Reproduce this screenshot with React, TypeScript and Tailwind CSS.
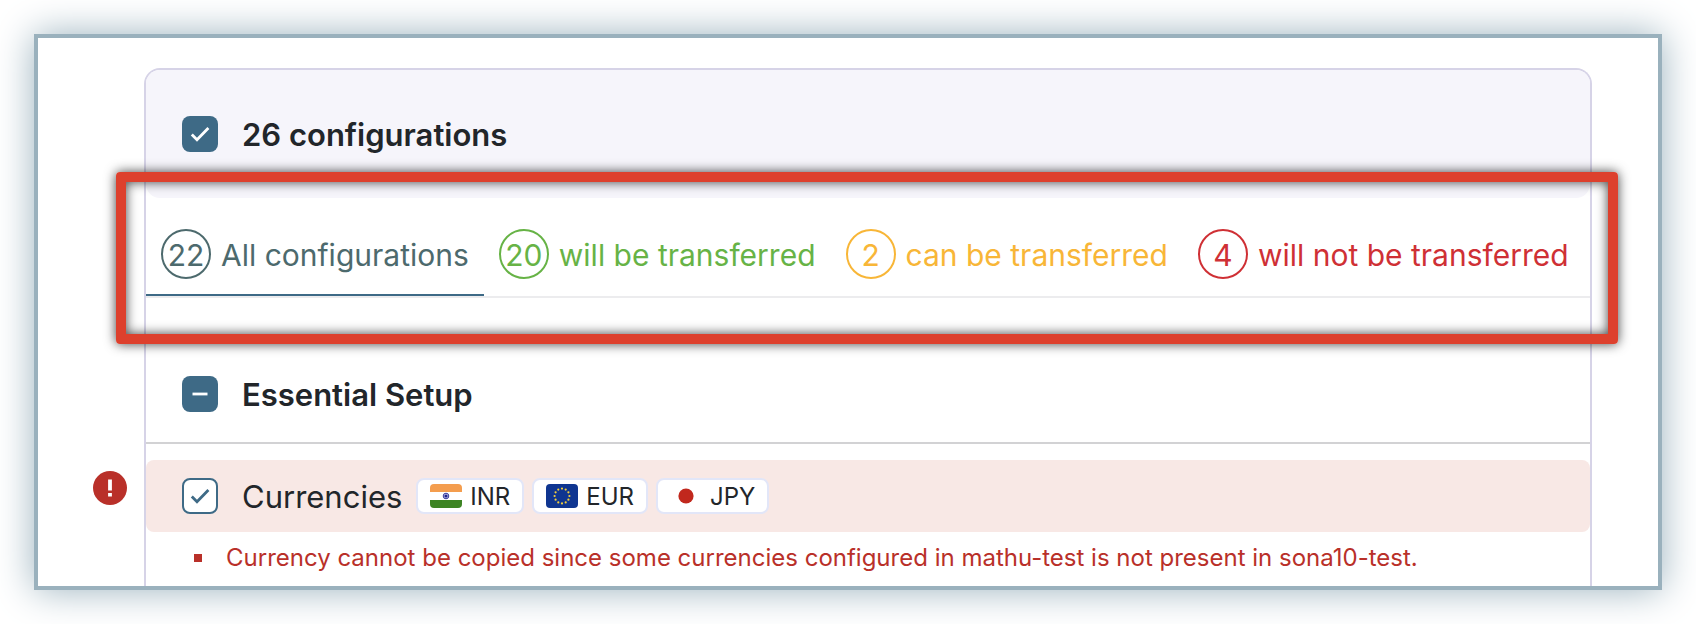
import { useState, type ReactNode } from 'react';
import clsx from 'clsx';

const tabs = [
    { id: 'all', count: 22, label: 'All configurations', color: 'text-[#4d6a6d]' },
    { id: 'will', count: 20, label: 'will be transferred', color: 'text-[#67b346]' },
    { id: 'can', count: 2, label: 'can be transferred', color: 'text-[#f8b637]' },
    { id: 'not', count: 4, label: 'will not be transferred', color: 'text-[#cf3035]' },
];

const currencies = [
    { code: 'INR', flag: <IndiaFlag /> },
    { code: 'EUR', flag: <EuropeFlag /> },
    { code: 'JPY', flag: <JapanFlag /> },
];

function IndiaFlag() {
    return (
        <svg viewBox="0 0 32 24" className="w-8 h-6 rounded-sm" aria-hidden="true">
            <rect width="32" height="24" fill="#fff" />
            <rect width="32" height="8" fill="#f49d4e" />
            <rect y="16" width="32" height="8" fill="#3d8424" />
            <circle cx="16" cy="12" r="2.8" fill="#c5c6e6" stroke="#3a3c9c" strokeWidth="1" />
            <circle cx="16" cy="12" r="1.6" fill="#1f2290" />
        </svg>
    );
}

function EuropeFlag() {
    const stars = Array.from({ length: 12 }, (_, i) => (i * Math.PI) / 6);
    return (
        <svg viewBox="0 0 32 24" className="w-8 h-6 rounded-sm" aria-hidden="true">
            <rect width="32" height="24" fill="#0f3590" />
            {stars.map((a) => (
                <circle key={a} cx={16 + 7.4 * Math.sin(a)} cy={12 - 7.4 * Math.cos(a)} r="1.1" fill="#f3cf3c" />
            ))}
        </svg>
    );
}

function JapanFlag() {
    return (
        <svg viewBox="0 0 32 24" className="w-8 h-6 rounded-sm" aria-hidden="true">
            <rect width="32" height="24" fill="#fff" />
            <circle cx="16" cy="12" r="7.6" fill="#c1281d" />
        </svg>
    );
}

interface CheckFieldProps {
    id: string;
    mark?: 'check' | 'minus';
    outlined?: boolean;
    className?: string;
    children: ReactNode;
}

function CheckField({ id, mark = 'check', outlined = false, className, children }: CheckFieldProps) {
    const [checked, setChecked] = useState(true);

    return (
        <div className="flex items-center gap-6">
            <span className="grid size-9 shrink-0 place-items-center">
                <input
                    id={id}
                    type="checkbox"
                    checked={checked}
                    onChange={() => setChecked(!checked)}
                    className={clsx(
                        "col-start-1 row-start-1 size-9 appearance-none rounded-lg",
                        outlined ? "border-2 border-[#3e6a86] bg-white" : "bg-[#3e6a86]"
                    )}
                />
                {checked && (
                    <svg
                        viewBox="0 0 36 36"
                        fill="none"
                        strokeWidth="2.8"
                        className={clsx(
                            "pointer-events-none col-start-1 row-start-1 size-9",
                            outlined ? "stroke-[#3e6a86]" : "stroke-white"
                        )}
                        aria-hidden="true"
                    >
                        <path d={mark === 'check' ? 'M9.8 18.4l5.2 5.3L26.4 12' : 'M10.5 18h15'} />
                    </svg>
                )}
            </span>
            <label htmlFor={id} className={clsx("pt-0.5 text-[31px] leading-10 text-[#22262a]", className)}>
                {children}
            </label>
        </div>
    );
}

function Tabs() {
    const [active, setActive] = useState('all');

    return (
        <div className="relative">
            <div role="tablist" className="flex border-b-2 border-[#ececee]">
                {tabs.map((tab) => (
                    <button
                        key={tab.id}
                        type="button"
                        role="tab"
                        aria-selected={active === tab.id}
                        onClick={() => setActive(tab.id)}
                        className={clsx(
                            "flex items-center gap-2.5 whitespace-nowrap border-b-2 px-[15px] pt-[31px] pb-[15px] text-3xl",
                            tab.color,
                            active === tab.id ? "border-[#3e6a86]" : "border-transparent"
                        )}
                    >
                        <span className="flex size-[50px] shrink-0 items-center justify-center rounded-full border-2 border-current pt-0.5">
                            {tab.count}
                        </span>
                        <span className="pt-0.5">{tab.label}</span>
                    </button>
                ))}
            </div>
            {/* Callout around the tab bar */}
            <div className="pointer-events-none absolute -top-[26px] -right-7 -bottom-[46px] -left-[30px] rounded-sm shadow-[0_0_12px_rgba(0,0,0,0.75)]">
                <div className="h-full rounded-sm border-10 border-[#dd402d] shadow-[inset_0_0_12px_rgba(0,0,0,0.75)]" />
            </div>
        </div>
    );
}

export default function App() {
    return (
        <div className="bg-white p-[34px] font-['Inter',sans-serif]">
            <main className="border-4 border-[#9ab1bd] bg-white pt-[30px] pr-[66px] pl-[106px] shadow-[0_0_36px_#9ab1bd]">
                <section className="rounded-t-2xl border-2 border-b-0 border-[#d6d3e7]">
                    <header className="flex h-32 items-center rounded-[14px] bg-[#f6f5fb] px-9">
                        <CheckField id="all-configurations" className="font-semibold">26 configurations</CheckField>
                    </header>

                    <Tabs />

                    <div className="mt-12 flex h-[98px] items-center border-b-2 border-[#d2d2d4] px-9">
                        <CheckField id="essential-setup" mark="minus" className="font-semibold">Essential Setup</CheckField>
                    </div>

                    <div className="relative mt-4 flex h-[72px] items-center gap-3.5 rounded-lg bg-[#f8e8e5] px-9">
                        {/* Error marker in the gutter */}
                        <svg viewBox="0 0 34 34" className="absolute top-[11px] -left-[53px] size-[34px]" role="img" aria-label="Error">
                            <circle cx="17" cy="17" r="17" fill="#b93029" />
                            <path d="M17 8.5v11M17 22v3.5" stroke="#fff" strokeWidth="3.8" />
                        </svg>
                        <CheckField id="currencies" outlined>Currencies</CheckField>
                        <div className="flex gap-2">
                            {currencies.map((currency) => (
                                <span
                                    key={currency.code}
                                    className="flex h-9 items-center gap-2 rounded-lg border-2 border-[#e2e6f8] bg-white px-3 text-2xl text-[#22262a]"
                                >
                                    {currency.flag}
                                    <span className="pt-0.5">{currency.code}</span>
                                </span>
                            ))}
                        </div>
                    </div>

                    <ul className="pt-2.5 pb-3 pl-12 text-2xl text-[#b93029]">
                        <li className="flex items-center gap-6">
                            <span className="size-2 shrink-0 bg-current" />
                            Currency cannot be copied since some currencies configured in mathu-test is not present in sona10-test.
                        </li>
                    </ul>
                </section>
            </main>
        </div>
    );
}
